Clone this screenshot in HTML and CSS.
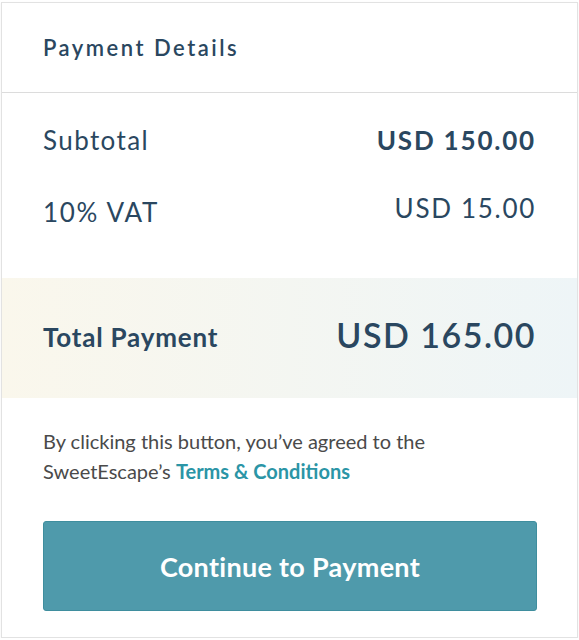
FILE: index.html
```html
<!DOCTYPE html>
<html>
<head>
<meta charset="utf-8">
<link rel="stylesheet" href="styles.css">
</head>
<body>
<div class="card">
  <div class="header">Payment Details</div>
  <div class="lines">
    <div class="row">
      <span class="label">Subtotal</span>
      <span class="amount strong">USD 150.00</span>
    </div>
    <div class="row vat">
      <span class="label">10% VAT</span>
      <span class="amount">USD 15.00</span>
    </div>
  </div>
  <div class="total">
    <span class="total-label">Total Payment</span>
    <span class="total-amount">USD 165.00</span>
  </div>
  <div class="footer">
    <p class="note">By clicking this button, you’ve agreed to the SweetEscape’s <a class="link" href="#">Terms &amp; Conditions</a></p>
    <button class="btn">Continue to Payment</button>
  </div>
</div>
</body>
</html>
```
FILE: styles.css
```css
* { box-sizing: border-box; }
html, body { margin: 0; padding: 0; background: #fff; }
body { padding: 2px 1px 0 1px; font-family: Lato, "Open Sans", sans-serif; color: #2a4760; }
.card {
  width: 577px;
  height: 636px;
  border: 1px solid #e2e2e2;
  box-shadow: 0 1px 2px rgba(0,0,0,0.06);
  display: flex;
  flex-direction: column;
}
.header {
  height: 90px;
  padding: 0 41px 0 41px;
  display: flex;
  align-items: center;
  font-size: 22px;
  font-weight: 600;
  letter-spacing: 2.5px;
  border-bottom: 1px solid #dcdcdc;
}
.lines { padding: 31px 41px 0 41px; height: 185px; }
.row { display: flex; justify-content: space-between; align-items: flex-start; font-size: 26px; letter-spacing: 1.4px; }
.row.vat { margin-top: 36px; }
.row.vat .label { padding-top: 4px; letter-spacing: 1.7px; }
.amount { letter-spacing: 1.7px; }
.amount.strong { font-weight: 700; letter-spacing: 1.8px; }
.label { font-weight: 400; }
.total {
  height: 120px;
  padding: 0 41px 8px 41px;
  display: flex;
  justify-content: space-between;
  align-items: center;
  background: linear-gradient(90deg, #faf7ec 0%, #eef5f7 100%);
}
.total-label { font-size: 26px; font-weight: 700; letter-spacing: 0.8px; margin-top: 6px; }
.total-amount { font-size: 34px; font-weight: 600; letter-spacing: 1.5px; }
.footer { padding: 28px 41px 0 41px; }
.note { margin: 0; font-size: 20px; line-height: 30px; color: #4a4a4a; }
.link { color: #2b95a6; font-weight: 700; text-decoration: none; }
.btn {
  display: block;
  margin-top: 35px;
  width: 494px;
  height: 90px;
  border: 1px solid #3f8e9e;
  border-radius: 3px;
  background: #4f9aab;
  color: #fff;
  font-family: Lato, sans-serif;
  font-size: 27px;
  font-weight: 700;
  letter-spacing: 0.3px;
}
```
